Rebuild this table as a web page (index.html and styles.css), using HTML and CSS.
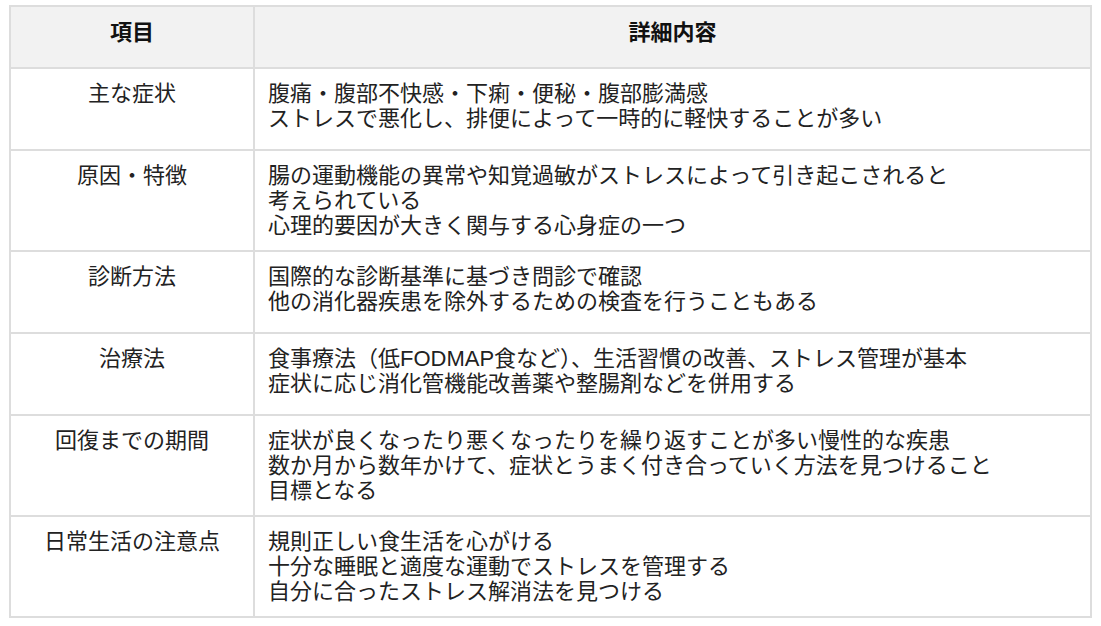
FILE: index.html
```html
<!DOCTYPE html>
<html lang="ja">
<head>
<meta charset="utf-8">
<title>過敏性腸症候群</title>
<link rel="stylesheet" href="styles.css">
</head>
<body>
<table class="info">
  <thead>
    <tr><th class="c-item">項目</th><th class="c-detail">詳細内容</th></tr>
  </thead>
  <tbody>
    <tr><td class="c-item">主な症状</td><td class="c-detail">腹痛・腹部不快感・下痢・便秘・腹部膨満感<br>ストレスで悪化し、排便によって一時的に軽快することが多い</td></tr>
    <tr><td class="c-item">原因・特徴</td><td class="c-detail">腸の運動機能の異常や知覚過敏がストレスによって引き起こされると<br>考えられている<br>心理的要因が大きく関与する心身症の一つ</td></tr>
    <tr><td class="c-item">診断方法</td><td class="c-detail">国際的な診断基準に基づき問診で確認<br>他の消化器疾患を除外するための検査を行うこともある</td></tr>
    <tr><td class="c-item">治療法</td><td class="c-detail">食事療法（低FODMAP食など）、生活習慣の改善、ストレス管理が基本<br>症状に応じ消化管機能改善薬や整腸剤などを併用する</td></tr>
    <tr><td class="c-item">回復までの期間</td><td class="c-detail">症状が良くなったり悪くなったりを繰り返すことが多い慢性的な疾患<br>数か月から数年かけて、症状とうまく付き合っていく方法を見つけること<br>目標となる</td></tr>
    <tr><td class="c-item">日常生活の注意点</td><td class="c-detail">規則正しい食生活を心がける<br>十分な睡眠と適度な運動でストレスを管理する<br>自分に合ったストレス解消法を見つける</td></tr>
  </tbody>
</table>
</body>
</html>
```
FILE: styles.css
```css
html, body {
  margin: 0;
  padding: 0;
  background: #ffffff;
}
body {
  padding: 5px 9px;
  font-family: "Liberation Sans", "Noto Sans CJK JP", sans-serif;
  font-size: 22px;
  line-height: 25px;
  color: #222222;
}
.info {
  width: 100%;
  border-collapse: collapse;
  table-layout: fixed;
}
.info th,
.info td {
  border: 2px solid #dddddd;
  vertical-align: top;
  padding: 12px 13px 12px 13px;
}
.info thead tr {
  height: 62px;
}
.info tbody tr {
  height: 82px;
}
.info th {
  background: #f2f2f2;
  font-weight: bold;
  text-align: center;
  color: #111111;
  padding-top: 13px;
}
.info .c-item {
  width: 216px;
  text-align: center;
}
.info td.c-detail {
  text-align: left;
}
```
